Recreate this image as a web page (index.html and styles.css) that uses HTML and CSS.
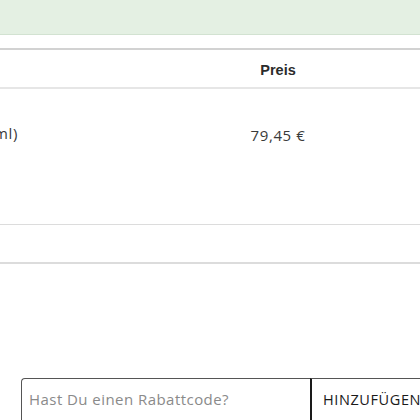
FILE: index.html
```html
<!DOCTYPE html>
<html lang="de">
<head>
<meta charset="utf-8">
<link rel="stylesheet" href="styles.css">
</head>
<body>
<div class="notice"></div>
<div class="cart">
  <div class="row head">
    <div class="cell name"></div>
    <div class="cell price"><span class="th">Preis</span></div>
  </div>
  <div class="row item">
    <div class="cell name"><span class="pname">Eau de Parfum (100 ml)</span></div>
    <div class="cell price">79,45 €</div>
  </div>
  <div class="row extra"></div>
</div>
<form class="coupon">
  <input class="code" type="text" placeholder="Hast Du einen Rabattcode?">
  <button class="add" type="button">HINZUFÜGEN</button>
</form>
</body>
</html>
```
FILE: styles.css
```css
html, body {
  margin: 0;
  padding: 0;
  height: 420px;
  overflow: hidden;
  background: #fff;
  font-family: "Open Sans", "Liberation Sans", sans-serif;
  color: #333;
}
.notice {
  height: 34px;
  background: #e4f0e3;
  border-bottom: 1px solid #d2e2d1;
}
.cart {
  margin-top: 13px;
  border-top: 2px solid #d2d2d2;
}
.row {
  display: flex;
}
.cell.name {
  width: 18px;
  display: flex;
  justify-content: flex-end;
  white-space: nowrap;
}
.cell.price {
  margin-left: 228px;
  width: 64px;
  text-align: center;
  white-space: nowrap;
}
.head {
  height: 37px;
  align-items: center;
  border-bottom: 2px solid #e6e6e6;
}
.th {
  font-family: "Liberation Sans", Arial, sans-serif;
  font-weight: 700;
  font-size: 14.5px;
  color: #2b2b2b;
}
.item {
  height: 135px;
  border-bottom: 1px solid #dcdcdc;
  font-size: 15px;
  letter-spacing: 0.6px;
  color: #3a3a3a;
}
.item .cell {
  padding-top: 34px;
}
.item .cell.price {
  padding-top: 36px;
}
.extra {
  height: 37px;
  border-bottom: 2px solid #dcdcdc;
}
.coupon {
  display: flex;
  margin: 114px 0 0 21px;
  height: 60px;
}
.code {
  flex: 0 0 289px;
  width: 289px;
  box-sizing: border-box;
  border: 1px solid #555;
  border-right: none;
  border-radius: 4px 0 0 4px;
  padding: 0 0 18px 7px;
  font-family: inherit;
  font-size: 15px;
  letter-spacing: 0.45px;
  color: #333;
  outline: none;
}
.code::placeholder {
  color: #8a8a8a;
}
.add {
  flex: 0 0 140px;
  width: 140px;
  box-sizing: border-box;
  border: 1px solid #555;
  border-left: 2px solid #1a1a1a;
  background: #fff;
  padding: 0 0 18px 11px;
  text-align: left;
  font-family: inherit;
  font-size: 14.5px;
  letter-spacing: 0.6px;
  color: #1a1a1a;
}
```
